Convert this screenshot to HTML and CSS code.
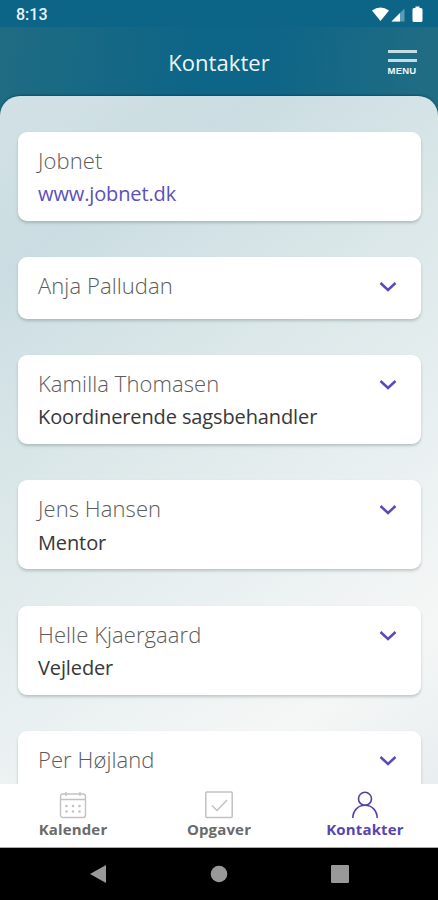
FILE: index.html
```html
<!DOCTYPE html>
<html lang="da">
<head>
<meta charset="utf-8">
<meta name="viewport" content="width=device-width">
<title>Kontakter</title>
<link rel="stylesheet" href="styles.css">
</head>
<body>
<div class="phone">
  <div class="status">
    <span class="time">8:13</span>
    <svg class="status-icons" width="54" height="18" viewBox="0 0 54 18">
      <path fill="#fff" d="M1 4.500Q9.500-1.500 18 4.500L9.500 15Z"/>
      <path fill="#5c9ab5" d="M33.500 2.500V15.500H20.500Z"/>
      <path fill="#fff" d="M29 7V15.500H20.500Z"/>
      <path fill="#fff" d="M44.500 .5h4v1.500h1.500q1.500 0 1.500 1.500v11q0 1.500-1.500 1.500h-7q-1.500 0-1.500-1.500v-11q0-1.500 1.500-1.500h1.500z"/>
    </svg>
  </div>
  <header class="header">
    <h1 class="title">Kontakter</h1>
    <div class="menu">
      <span class="bar"></span>
      <span class="bar"></span>
      <span class="menu-label">MENU</span>
    </div>
  </header>
  <main class="content">
    <section class="card">
      <div class="name">Jobnet</div>
      <a class="link">www.jobnet.dk</a>
    </section>
    <section class="card">
      <div class="name">Anja Palludan</div>
      <svg class="chevron" width="18" height="12" viewBox="0 0 18 12"><path d="M1.500 2l7.500 7 7.500-7"/></svg>
    </section>
    <section class="card">
      <div class="name">Kamilla Thomasen</div>
      <div class="role">Koordinerende sagsbehandler</div>
      <svg class="chevron" width="18" height="12" viewBox="0 0 18 12"><path d="M1.500 2l7.500 7 7.500-7"/></svg>
    </section>
    <section class="card">
      <div class="name">Jens Hansen</div>
      <div class="role">Mentor</div>
      <svg class="chevron" width="18" height="12" viewBox="0 0 18 12"><path d="M1.500 2l7.500 7 7.500-7"/></svg>
    </section>
    <section class="card">
      <div class="name">Helle Kjaergaard</div>
      <div class="role">Vejleder</div>
      <svg class="chevron" width="18" height="12" viewBox="0 0 18 12"><path d="M1.500 2l7.500 7 7.500-7"/></svg>
    </section>
    <section class="card">
      <div class="name">Per Højland</div>
      <svg class="chevron" width="18" height="12" viewBox="0 0 18 12"><path d="M1.500 2l7.500 7 7.500-7"/></svg>
    </section>
  </main>
  <nav class="tabs">
    <div class="tab">
      <svg width="28" height="28" viewBox="0 0 28 28" fill="none" stroke="#c2c2c2" stroke-width="1.400">
        <rect x="1.500" y="3" width="25" height="23.500" rx="2.500"/>
        <path d="M1.500 8.500h25M7 1v4M21 1v4"/>
        <path stroke-width="2.600" stroke-linecap="round" d="M7.500 15h.01M14 15h.01M20.500 15h.01M7.500 20.500h.01M14 20.500h.01M20.500 20.500h.01"/>
      </svg>
      <span>Kalender</span>
    </div>
    <div class="tab">
      <svg width="28" height="28" viewBox="0 0 28 28" fill="none" stroke="#c2c2c2" stroke-width="1.500">
        <rect x=".8" y="1" width="26.400" height="25.500" rx="1"/>
        <path d="M7 14.500l5 5L22 9"/>
      </svg>
      <span>Opgaver</span>
    </div>
    <div class="tab active">
      <svg width="28" height="28" viewBox="0 0 28 28" fill="none" stroke="#5040a8" stroke-width="1.600">
        <circle cx="14" cy="7.800" r="6.500"/>
        <path d="M1.800 27C2 19.500 7 14.300 14 14.300S26 19.500 26.200 27"/>
      </svg>
      <span>Kontakter</span>
    </div>
  </nav>
  <div class="system">
    <svg width="18" height="18" viewBox="0 0 18 18"><path fill="#999" d="M17 0v18L1 9z"/></svg>
    <svg width="18" height="18" viewBox="0 0 18 18"><circle fill="#999" cx="9" cy="9" r="8.300"/></svg>
    <svg width="18" height="18" viewBox="0 0 18 18"><rect fill="#999" width="18" height="18" rx="1"/></svg>
  </div>
</div>
</body>
</html>
```
FILE: styles.css
```css
* { box-sizing: border-box; }
body { margin: 0; font-family: "Open Sans", sans-serif; }
.phone {
  width: 438px;
  height: 900px;
  display: flex;
  flex-direction: column;
  overflow: hidden;
  background: linear-gradient(98deg, #206c82 0, #0d6587 45%, #0e6587 60%, #226d83 100%) 0 0 / 100% 150px no-repeat;
}
.status {
  height: 27px;
  flex: none;
  display: flex;
  justify-content: space-between;
  align-items: center;
  padding: 1px 13px 0 16px;
  background: #0c6587;
}
.time { font: 500 16px/20px Roboto, sans-serif; color: #e9f5fb; padding-top: 2px; }
.status-icons { display: block; margin-top: 1px; }
.header {
  height: 69px;
  flex: none;
  display: grid;
  grid-template-columns: 1fr auto 1fr;
  align-items: start;
}
.title {
  grid-column: 2;
  margin: 20px 0 0;
  font-size: 22px;
  line-height: 30px;
  font-weight: 400;
  letter-spacing: .05px;
  color: #eef8fc;
}
.menu {
  justify-self: end;
  width: 30px;
  margin: 23px 21px 0 0;
  display: flex;
  flex-direction: column;
  align-items: center;
  gap: 6px;
}
.bar { width: 29px; height: 3px; background: #c5dce5; }
.menu-label { font: 700 9.500px/10px "Liberation Sans", sans-serif; color: #eef8fc; margin-top: -2px; letter-spacing: .2px; }
.content {
  height: 688px;
  flex: none;
  overflow: hidden;
  display: flex;
  flex-direction: column;
  gap: 36.450px;
  padding: 36px 17px 0 18px;
  border-radius: 20px 20px 0 0;
  background: linear-gradient(145deg, #d2e1e5 0, #cbdde2 18%, #d9e6e8 38%, #e8eff0 62%, #f5f7f6 84%, #e8edef 100%);
  box-shadow: 0 -1px 2px rgba(0, 50, 75, .5);
}
.card {
  position: relative;
  flex: none;
  min-height: 61.500px;
  padding: 12px 20px;
  border-radius: 9px;
  background: #fff;
  box-shadow: 0 2px 3px rgba(60, 80, 80, .27);
}
.name, .role, .link { display: block; line-height: 32.400px; white-space: nowrap; }
.name { font-size: 22px; font-weight: 300; color: #5b5b5b; letter-spacing: .08px; }
.role, .link { font-size: 20px; letter-spacing: -.12px; padding-top: 1.800px; margin-bottom: -1.800px; }
.role { color: #383838; }
.link { color: #5d4fba; }
.chevron {
  position: absolute;
  right: 24px;
  top: 24px;
  fill: none;
  stroke: #594bbb;
  stroke-width: 2.500;
}
.tabs {
  height: 64px;
  flex: none;
  display: grid;
  grid-template-columns: repeat(3, 1fr);
  background: #fff;
  border-bottom: 1px solid #aaa;
}
.tab {
  display: flex;
  flex-direction: column;
  align-items: center;
  padding-top: 7px;
  font-size: 15px;
  line-height: 20px;
  font-weight: 700;
  letter-spacing: .15px;
  color: #6a6a6a;
}
.tab svg { display: block; }
.tab.active { color: #5545b2; }
.system {
  flex: 1;
  background: #000;
  display: flex;
  justify-content: center;
  align-items: center;
  gap: 103px;
}
```
